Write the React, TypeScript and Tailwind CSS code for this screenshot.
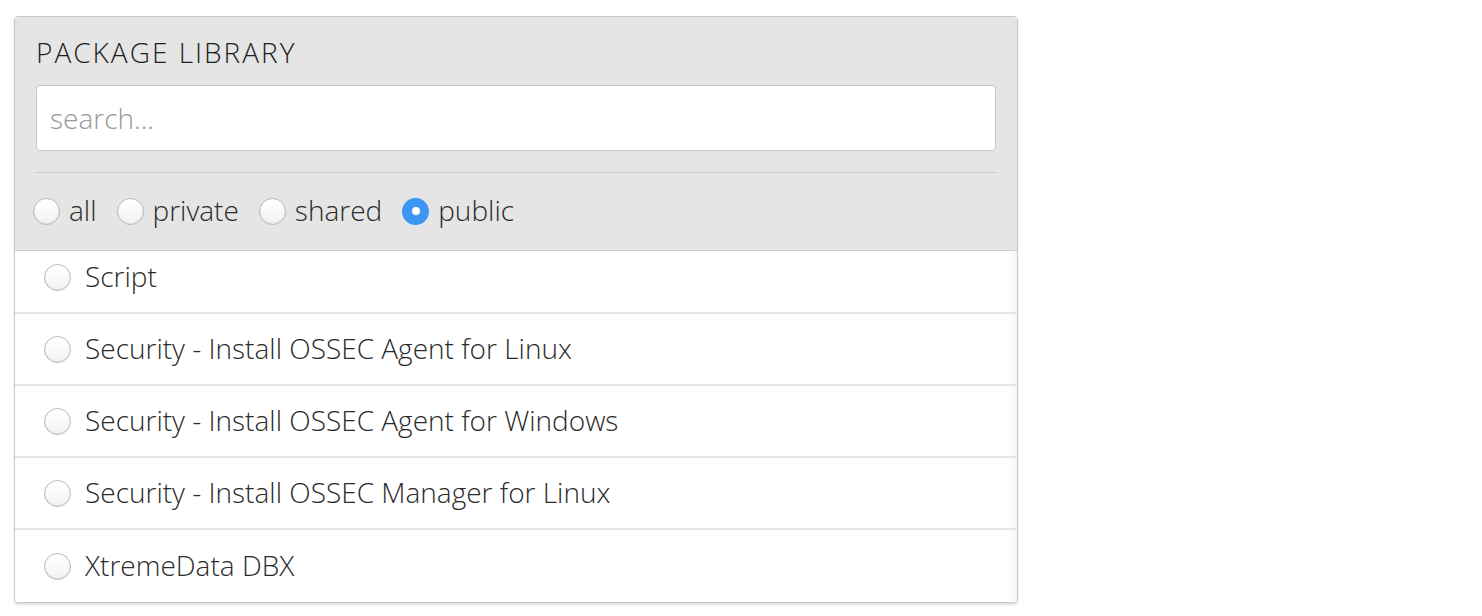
import React, { useState } from 'react';

const PACKAGES = [
  'Script',
  'Security - Install OSSEC Agent for Linux',
  'Security - Install OSSEC Agent for Windows',
  'Security - Install OSSEC Manager for Linux',
  'XtremeData DBX',
];

const SCOPES = ['all', 'private', 'shared', 'public'];

function Radio({ checked }: { checked: boolean }) {
  if (checked) {
    return (
      <span className="flex h-[27px] w-[27px] shrink-0 items-center justify-center rounded-full bg-[#3d96f2]">
        <span className="h-[8px] w-[8px] rounded-full bg-white" />
      </span>
    );
  }
  return (
    <span className="h-[27px] w-[27px] shrink-0 rounded-full border border-[#b8b8b8] bg-gradient-to-b from-white to-[#f3f3f3] shadow-[inset_0_-1px_2px_rgba(0,0,0,0.08)]" />
  );
}

export default function App() {
  const [scope, setScope] = useState('public');
  const [selected, setSelected] = useState<string | null>(null);

  return (
    <div className="min-h-screen bg-white pl-[14px] pt-[16px] font-['Open_Sans',sans-serif] text-[#2b2b2b]">
      <div className="w-[1004px] overflow-hidden rounded-[4px] border border-[#c9c9c9] shadow-[0_2px_2px_rgba(0,0,0,0.12)]">
        <div className="border-b border-[#cdcdcd] bg-[#e5e5e5] px-[21px] pt-[17px]">
          <h2 className="text-[28px] font-light leading-[36px] tracking-[2px] text-[#1e1e1e]">PACKAGE LIBRARY</h2>
          <input
            type="text"
            placeholder="search..."
            className="mt-[15px] h-[66px] w-full rounded-[4px] border border-[#c8c8c8] bg-white px-[13px] text-[28px] font-light outline-none placeholder:text-[#999]"
          />
          <div className="mt-[21px] border-t border-[#cbcbcb]" />
          <div className="-ml-[3px] flex h-[77px] items-center pb-[1px]">
            {SCOPES.map((s) => (
              <label
                key={s}
                onClick={() => setScope(s)}
                className="mr-[20px] flex cursor-pointer items-center gap-[9px] text-[28px] font-light"
              >
                <Radio checked={scope === s} />
                <span className="-mt-[3px]">{s}</span>
              </label>
            ))}
          </div>
        </div>
        <div className="h-[351px] overflow-hidden bg-white shadow-[inset_-12px_0_10px_-10px_rgba(0,0,0,0.06)]">
          <div className="-mt-[9px]">
            {PACKAGES.map((p, i) => (
              <div
                key={p}
                onClick={() => setSelected(p)}
                className={`flex h-[72px] cursor-pointer items-center gap-[14px] pl-[29px] text-[28px] font-light ${
                  i < PACKAGES.length - 1 ? 'border-b-2 border-[#e6e6e6]' : ''
                }`}
              >
                <Radio checked={selected === p} />
                <span className="-mt-[3px]">{p}</span>
              </div>
            ))}
          </div>
        </div>
      </div>
    </div>
  );
}
